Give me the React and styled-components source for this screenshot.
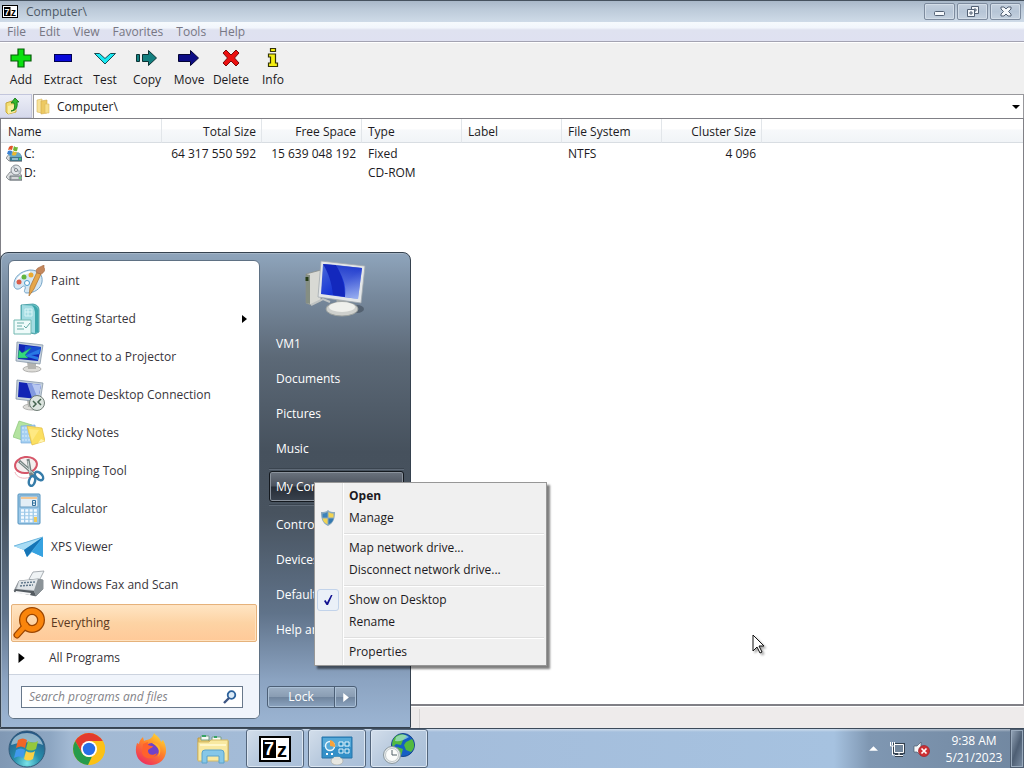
import styled, { createGlobalStyle, css } from "styled-components";

const GlobalStyle = createGlobalStyle`
    *, *::before, *::after {
        box-sizing: border-box;
    }

    body {
        margin: 0;
        font-family: "Open Sans", "Noto Sans", sans-serif;
        font-size: 12px;
        line-height: 16px;
        color: #1c1a22;
        background: #fff;
    }

    button, input {
        font: inherit;
        color: inherit;
    }

    button {
        padding: 0;
        border: 0;
        background: none;
    }

    ul {
        list-style: none;
        margin: 0;
        padding: 0;
    }

    svg {
        display: block;
        flex-shrink: 0;
    }
`;

const Desktop = styled.div`
    position: relative;
    display: flex;
    flex-direction: column;
    min-height: 100vh;
    overflow: hidden;
`;

/* ---------- file manager window ---------- */

const Window = styled.main`
    flex: 1;
    display: flex;
    flex-direction: column;
`;

const TitleBar = styled.header`
    display: flex;
    align-items: center;
    gap: 8px;
    height: 22px;
    padding: 0 3px 0 2px;
    border-top: 1px solid #46525f;
    background: linear-gradient(#a9b8c9, #bccad9 40%, #cfdbe8);
    color: #4d5865;

    h1 {
        flex: 1;
        margin: 0;
        font-size: 12px;
        font-weight: 400;
    }
`;

const WindowButtons = styled.div`
    display: flex;
    gap: 2px;
`;

const WindowButton = styled.button`
    display: flex;
    align-items: center;
    justify-content: center;
    width: 31px;
    height: 17px;
    border: 1px solid #7d8b9e;
    border-radius: 2px;
    background: linear-gradient(#c3cfdd, #b6c5d6 50%, #c4d1df);
    box-shadow: inset 0 0 0 1px #d3dde8;
`;

const MenuBar = styled.nav`
    display: flex;
    gap: 13px;
    height: 20px;
    padding: 1px 7px 0;
    border-bottom: 1px solid #a3a3b2;
    background: linear-gradient(#f6fafd, #f2f6fc 30%, #dfe2f0 42%, #dfe1f1);

    button {
        color: #777784;
    }
`;

const Toolbar = styled.div`
    display: flex;
    height: 52px;
    border-top: 1px solid #fff;
    background: #f0f0f0;
`;

const ToolButton = styled.button`
    display: flex;
    flex-direction: column;
    align-items: center;
    gap: 4px;
    width: 42px;
    padding-top: 5px;
`;

const AddressBar = styled.div`
    display: flex;
    height: 24px;
    background: #f0f0f0;
`;

const UpButton = styled.button`
    display: flex;
    align-items: center;
    width: 32px;
    padding-left: 5px;
    border: 1px solid #c3c6dc;
    border-left: 0;
    background: linear-gradient(#eceef7, #d6d9eb);
`;

const AddressField = styled.label`
    flex: 1;
    display: flex;
    align-items: center;
    gap: 6px;
    margin-left: 1px;
    padding: 0 3px 0 1px;
    border: 1px solid #98989c;
    border-bottom: 0;
    background: #fff;

    input {
        flex: 1;
        min-width: 0;
        padding: 0;
        border: 0;
        outline: 0;
        background: none;
    }
`;

const ListPane = styled.section`
    flex: 1;
    border: 1px solid #808086;
    border-bottom-width: 2px;
    background: #fff;
`;

const DriveTable = styled.table`
    width: 100%;
    table-layout: fixed;
    border-collapse: separate;
    border-spacing: 0;

    th, td {
        padding: 2px 6px 0;
        text-align: left;
        font-weight: 400;
        white-space: nowrap;
    }

    th {
        height: 24px;
        border-right: 1px solid #e2e6ea;
        border-bottom: 1px solid #d8dde2;
        background: linear-gradient(#fff 45%, #f7f9fb 46%, #f1f4f7);
    }

    th:first-child {
        padding-left: 7px;
    }

    th:last-child {
        border-right: 0;
    }

    th.number {
        padding-right: 5px;
    }

    td {
        height: 19px;
    }

    td:first-child {
        padding-left: 5px;
    }

    .number {
        text-align: right;
    }
`;

const NameCell = styled.div`
    display: flex;
    align-items: center;
    gap: 2px;
    height: 17px;
`;

const StatusBar = styled.footer`
    display: flex;
    height: 22px;
    padding: 2px 0 0 419px;
    border-top: 1px solid #fff;
    background: #eeebeb;

    span {
        border-left: 1px solid #d5d2d2;
    }
`;

/* ---------- start menu ---------- */

const StartMenu = styled.aside`
    position: absolute;
    left: 0;
    bottom: 40px;
    display: flex;
    width: 411px;
    padding: 7px 6px 8px 7px;
    border: 1px solid #36424f;
    border-radius: 8px 8px 0 0;
    background: linear-gradient(#8fa5bc 0, #77899d 9%, #5c6977 22%, #46515d 42%, #48535f 55%, #60738a 76%, #8ba3c1 90%, #9cb5d3);
    box-shadow: inset 1px 1px 0 #a3b4c5;
`;

const ProgramsPane = styled.div`
    display: flex;
    flex-direction: column;
    width: 252px;
    border: 1px solid #5f7184;
    border-radius: 6px;
    background: #fff;
    overflow: hidden;
`;

const ProgramList = styled.ul`
    padding: 1px 2px 0;
`;

const ProgramButton = styled.button`
    display: flex;
    align-items: center;
    gap: 6px;
    width: 100%;
    height: ${props => props.$short ? "32px" : "38px"};
    padding: 0 9px 0 2px;
    text-align: left;
    color: #38353b;

    span {
        flex: 1;
    }

    ${props => props.$active && css`
        border: 1px solid #e5b27b;
        border-radius: 2px;
        padding-left: 1px;
        background: linear-gradient(#ffe5c3, #fdd3a4 50%, #ffc998);
        box-shadow: inset 0 0 0 1px #ffe2c0;
        color: #5c3820;
    `}

    ${props => props.$short && css`
        gap: 23px;
        padding-left: 5px;
    `}
`;

const SearchArea = styled.div`
    flex: 1;
    padding: 11px 16px 10px 12px;
    border-top: 1px solid #ccd3df;
    background: #f0f4fb;
`;

const SearchField = styled.label`
    display: flex;
    align-items: center;
    height: 22px;
    padding: 0 5px 0 7px;
    border: 1px solid #68788b;
    background: #fff;

    input {
        flex: 1;
        min-width: 0;
        padding: 0;
        border: 0;
        outline: 0;
        background: none;
    }

    input::placeholder {
        color: #848489;
        font-style: italic;
        opacity: 1;
    }
`;

const PlacesPane = styled.div`
    flex: 1;
    display: flex;
    flex-direction: column;
    padding-left: 7px;
`;

const UserPicture = styled.div`
    display: flex;
    justify-content: center;
    height: 66px;
    padding-right: 2px;
`;

const PlaceButton = styled.button`
    display: block;
    width: 100%;
    height: 35px;
    padding-left: 7px;
    text-align: left;
    color: #fff;
    white-space: nowrap;

    ${props => props.$active && css`
        height: 31px;
        padding-left: 6px;
        border: 1px solid #14191f;
        border-radius: 3px;
        background: linear-gradient(#6b737e, #4b525d 48%, #272d36 52%, #3a424e);
        box-shadow: inset 0 0 0 1px #8a929c;
    `}
`;

const PlaceGroup = styled.ul`
    margin-left: 2px;

    & + & {
        margin-top: 2px;
        padding-top: 2px;
        border-top: 1px solid #3a444f;
        box-shadow: inset 0 1px 0 #5f6a77;
    }
`;

const LockGroup = styled.div`
    display: flex;
    width: 90px;
    height: 22px;
    margin-top: auto;
    margin-bottom: 11px;
    border: 1px solid #4c5f76;
    border-radius: 3px;
    background: linear-gradient(#9db0c5, #8a9db3 48%, #70859e 52%, #8ca4c0);
    box-shadow: inset 0 0 0 1px #abc0d6;
    color: #fff;
`;

const LockButton = styled.button`
    flex: 1;
`;

const LockArrow = styled.button`
    display: flex;
    align-items: center;
    justify-content: center;
    width: 22px;
    border-left: 1px solid #4c5f76;
    box-shadow: inset 1px 0 0 #abc0d6;
`;

/* ---------- context menu ---------- */

const ContextMenu = styled.ul`
    position: absolute;
    left: 314px;
    bottom: 102px;
    width: 233px;
    padding: 2px;
    border: 1px solid #979797;
    background: linear-gradient(90deg, #f1f1f1 27px, #e2e3e3 27px, #e2e3e3 28px, #fff 28px, #fff 29px, #f0f0f0 29px);
    box-shadow: 3px 3px 2px rgba(0, 0, 0, 0.5);
`;

const ContextItem = styled.button`
    display: flex;
    align-items: center;
    width: 100%;
    height: 22px;
    font-weight: ${props => props.$bold ? 700 : 400};
    text-align: left;
`;

const IconSlot = styled.span`
    display: flex;
    align-items: center;
    justify-content: center;
    width: 22px;
    height: 22px;
    margin-right: 10px;

    ${props => props.$checked && css`
        border: 1px solid #c2d3ea;
        border-radius: 3px;
        background: #eaf0f8;
    `}
`;

const ContextDivider = styled.li`
    height: 8px;
    margin-left: 27px;
    padding-top: 4px;

    &::before {
        content: "";
        display: block;
        height: 2px;
        border-top: 1px solid #dfdfdf;
        background: #fff;
    }
`;

/* ---------- taskbar ---------- */

const Taskbar = styled.nav`
    display: flex;
    align-items: stretch;
    height: 40px;
    border-top: 1px solid #3c4a5a;
    background:
        linear-gradient(rgba(255, 255, 255, 0.45) 0, rgba(255, 255, 255, 0) 3px),
        linear-gradient(90deg, #8098b4 0, #8da6c2 50px, #a2b9d3 70px, #a4bddb 430px, #a6c2e0 calc(100% - 190px), #7f97b2 calc(100% - 155px), #7187a0);
`;

const StartButton = styled.button`
    width: 60px;
    padding-left: 8px;
`;

const TaskList = styled.div`
    flex: 1;
    display: flex;
    gap: 4px;
`;

const TaskButton = styled.button`
    display: flex;
    align-items: center;
    justify-content: center;
    width: 58px;

    ${props => props.$open && css`
        border: 1px solid #53657b;
        border-radius: 3px;
        background: linear-gradient(135deg, #d3deeb, #b5c7dc 50%, #a9bfd9);
        box-shadow: inset 0 0 0 1px #dbe6f2;
    `}
`;

const Tray = styled.div`
    display: flex;
    align-items: center;
    gap: 8px;

    button:first-child {
        padding-right: 3px;
    }
`;

const Clock = styled.time`
    width: 72px;
    color: #fff;
    text-align: center;
    line-height: 17px;
`;

const ShowDesktop = styled.button`
    align-self: stretch;
    width: 14px;
    margin-left: -8px;
    border: 1px solid #4e5d70;
    background: linear-gradient(110deg, #97a8bb, #4e5f74 50%, #7c8ea4);
    box-shadow: inset 0 0 0 1px #9aabbd;
`;

const Pointer = styled.svg`
    position: absolute;
    left: 752px;
    bottom: 113px;
    filter: drop-shadow(2px 2px 1px rgba(0, 0, 0, 0.35));
`;

/* ---------- icons ---------- */

const SevenZip = ({ size = 16 }) => (
    <svg width={size} height={size === 16 ? 13 : 26} viewBox="0 0 32 26">
        <rect width="32" height="26" fill="#000" />
        <rect x="2" y="2" width="28" height="22" fill="#fff" />
        <rect x="4" y="4" width="13" height="18" fill="#000" />
        <text x="5" y="19" fill="#fff" fontFamily="Liberation Sans, sans-serif" fontWeight="700" fontSize="18">7</text>
        <text x="18" y="21" fill="#000" fontFamily="Liberation Sans, sans-serif" fontWeight="700" fontSize="20">z</text>
    </svg>
);

const toolShapes = {
    Add: <path d="M9 1h6v6h7v6h-7v6H9v-6H2V7h7z" fill="#0be010" stroke="#045c08" strokeWidth="1.2" />,
    Extract: <rect x="3.500" y="6.500" width="17" height="7" fill="#0909d9" stroke="#000052" />,
    Test: <path d="M1.500 5.500h5l5.500 5 5.500-5h5L12 16z" fill="#19e9f2" stroke="#154b52" />,
    Copy: (
        <g fill="#138080" stroke="#0a3334">
            <path d="M1.500 6.500h3v7h-3zM7.500 6.500h6v-4l8 7.500-8 7.500v-4h-6z" />
        </g>
    ),
    Move: <path d="M1.500 6.500h12v-4l8 7.500-8 7.500v-4h-12z" fill="#0c0c85" stroke="#030334" />,
    Delete: <path d="M7 2l5 5 5-5 3 3-4.500 5 4.500 5-3 3-5-5-5 5-3-3 4.500-5L4 5z" fill="#ec1010" stroke="#780b0b" />,
    Info: (
        <g fill="#f4ee12" stroke="#343305" strokeWidth="1.200">
            <path d="M9.500.500h5v3h-5z" />
            <path d="M7.500 6h7v9h2v3.500h-9V15h2V9h-2z" />
        </g>
    ),
};

const UpFolder = () => (
    <svg width="16" height="18" viewBox="0 0 16 18">
        <path d="M1 6l6-2 4 2v9l-8 2-2-2z" fill="#f2dc70" stroke="#c9a93b" />
        <path d="M3 9l9-2-2 8-7 2z" fill="#faeea0" />
        <path d="M6 14c4-1 4-4 3-8H6l4-5 4 4h-2c1 5-1 9-6 9z" fill="#33b82c" stroke="#127012" strokeWidth=".8" />
    </svg>
);

const Folder = () => (
    <svg width="16" height="17" viewBox="0 0 16 17">
        <path d="M2 2l5-1v14l-5-1z" fill="#f8e39a" stroke="#d8b75d" strokeWidth=".6" />
        <path d="M6 3l6-1v13l-6 1z" fill="#edc962" stroke="#d2aa49" strokeWidth=".6" />
        <path d="M10 6h4v9h-4z" fill="#f7df8b" stroke="#dcba61" strokeWidth=".6" />
    </svg>
);

const Drive = ({ system }) => (
    <svg width="16" height="17" viewBox="0 0 16 17">
        <path d="M4 8h9l3 4v4H3l-3-3z" fill="#d9dcde" stroke="#777c80" strokeWidth=".8" />
        <path d="M4 12h12v4H4z" fill={system ? "#2f7f9d" : "#b3b7ba"} stroke="#5d676e" strokeWidth=".8" />
        {system ? (
            <g>
                <path d="M2 9l2-3 10 2 2 4H4z" fill="#6aaac6" />
                <path d="M3 2q2-2 4-1L6 5Q4 4 2 5z" fill="#e2562a" />
                <path d="M8 1q2 2 4 1l-1 4q-2 1-4-1z" fill="#6fb536" />
                <path d="M2 6q2-1 4 0l-1 4Q3 9 1 9z" fill="#3a80d3" />
                <path d="M7 6q2 2 4 1l-1 3q-2 1-4 0z" fill="#efb92c" />
            </g>
        ) : (
            <g>
                <circle cx="10" cy="6" r="5" fill="#e4e8eb" stroke="#868d93" />
                <path d="M10 6L7 2M10 6l4 2" stroke="#b5bdc3" strokeWidth="2" />
                <circle cx="10" cy="6" r="1.500" fill="#fff" stroke="#767d84" />
            </g>
        )}
        <path d="M6 14h6" stroke="#f6f6f6" />
        <circle cx="14" cy="14" r="1" fill="#50de5a" />
    </svg>
);

const Triangle = ({ dir = "right", color = "#000", size = 8 }) => (
    <svg width={size} height={size} viewBox="0 0 8 8">
        <path d={dir === "right" ? "M2 0l5 4-5 4z" : dir === "down" ? "M0 2h8L4 6z" : "M0 6h8L4 2z"} fill={color} />
    </svg>
);

const PaintIcon = () => (
    <svg width="32" height="32" viewBox="0 0 32 32">
        <path d="M1 21C0 12 8 6 17 5c9 0 13 5 12 12-1 7-8 11-15 11-3 0-3-2-2-4 1-3-1-4-3-2-3 3-7 3-8-1z" fill="#d4e7f4" stroke="#75a4c6" />
        <path d="M4 16c2-5 7-8 13-9" fill="none" stroke="#fff" strokeWidth="2" />
        <circle cx="6" cy="17" r="2.500" fill="#d95c47" />
        <circle cx="11" cy="12" r="2.500" fill="#62b53e" />
        <circle cx="18" cy="10" r="2.500" fill="#ecaa31" />
        <circle cx="14" cy="18" r="2.500" fill="#fff" stroke="#4b9dcc" />
        <path d="M16 31l1-9 7-15 4 2-7 15z" fill="#e6a74b" stroke="#a97032" strokeWidth=".7" />
        <path d="M24 8c-2-3 0-5 3-6l4-2v3c2 1 0 5-3 6z" fill="#c5875c" stroke="#a2683f" strokeWidth=".6" />
    </svg>
);

const GettingStartedIcon = () => (
    <svg width="32" height="32" viewBox="0 0 32 32">
        <path d="M8 2l12-1q6 1 6 6v22l-4 2-14-3z" fill="#6ec1c6" stroke="#37949c" strokeWidth=".8" />
        <path d="M9 2l10 1q3 2 3 6v21l-13-3z" fill="#a2dce2" />
        <path d="M19 2q5 1 6 5v22l-3 1V9q0-4-3-7z" fill="#3aa5aa" />
        <path d="M12 6h7v7h-7zM15 6v7M12 9h7" fill="none" stroke="#d8f4f6" />
        <path d="M1 17h17v14H1z" fill="#effbfa" stroke="#73b8b1" />
        <path d="M4 20h7M4 23h5M4 26h7M11 23l2 2 4-5" fill="none" stroke="#68aba6" />
    </svg>
);

const Monitor = ({ children }) => (
    <svg width="32" height="32" viewBox="0 0 32 32">
        <ellipse cx="19" cy="28" rx="9" ry="3" fill="#dddcd8" stroke="#a2a29f" strokeWidth=".8" />
        <path d="M14 21l9 1v6h-8z" fill="#b4b4b0" />
        <path d="M4 1l26 3-3 19-24-3z" fill="#c6d2dd" stroke="#8697a7" strokeWidth=".8" />
        <path d="M6 3l22 3-3 14-20-2z" fill="#1224b4" />
        {children}
    </svg>
);

const ProjectorIcon = () => (
    <Monitor>
        <path d="M12 5l16 1-1 7-16 3z" fill="#194dce" />
        <path d="M11 15l16-7-1 5-8 1 7 2v3z" fill="#2878e4" />
        <path d="M5 17l1-8 3 3 9-5-6 7 3 3z" fill="#35d97b" stroke="#199a66" strokeWidth=".5" />
    </Monitor>
);

const RemoteIcon = () => (
    <Monitor>
        <path d="M14 4l14 2-3 14-6-1z" fill="#8299e0" />
        <path d="M19 5l9 1-3 14z" fill="#b8c8f0" />
        <circle cx="24" cy="24" r="7.500" fill="#dce4df" stroke="#6e7c75" />
        <path d="M20 22l3 3-3 3M28 20l-3 3 3 3" fill="none" stroke="#44624e" strokeWidth="1.500" />
    </Monitor>
);

const StickyIcon = () => (
    <svg width="32" height="32" viewBox="0 0 32 32">
        <path d="M6 4l13 4-4 17-15-5z" fill="#b4e3a0" stroke="#89c679" strokeWidth=".7" />
        <path d="M8 9l14-1 1 18H8z" fill="#a5d0f2" stroke="#78acdc" strokeWidth=".7" />
        <path d="M9 11h10M9 15h10M9 19h10M9 23h10" stroke="#dceefa" strokeDasharray="2 1" />
        <path d="M14 9l15 2 3 13-13 4z" fill="#fbdf61" stroke="#e2bd43" strokeWidth=".7" />
        <path d="M16 12l10 1-7 11z" fill="#ffed92" opacity=".7" />
        <path d="M25 26l7-2-4-2z" fill="#fff3af" />
    </svg>
);

const SnippingIcon = () => (
    <svg width="32" height="32" viewBox="0 0 32 32">
        <ellipse cx="13" cy="10" rx="11" ry="8" transform="rotate(-8 13 10)" fill="#f3eeee" stroke="#d65669" strokeWidth="2" />
        <path d="M2 17c1 5 8 8 15 5" fill="none" stroke="#f0b6be" />
        <path d="M6 6l16 14M15 4l3 17" stroke="#788483" strokeWidth="3" />
        <path d="M7 7l14 12M15 6l2 12" stroke="#d4dedc" />
        <ellipse cx="19" cy="26" rx="3" ry="5" transform="rotate(15 19 26)" fill="none" stroke="#367ca9" strokeWidth="2.500" />
        <ellipse cx="26" cy="21" rx="3" ry="5" transform="rotate(-45 26 21)" fill="none" stroke="#367ca9" strokeWidth="2.500" />
    </svg>
);

const CalculatorIcon = () => (
    <svg width="32" height="32" viewBox="0 0 32 32">
        <rect x="5" y="1" width="22" height="30" rx="1" fill="#9dc9e9" stroke="#5191bd" />
        <rect x="7" y="3" width="18" height="11" fill="#e3eef6" stroke="#699dc2" />
        <path d="M8 4h16v2H8z" fill="#f3c794" />
        <path d="M19.500 7.500h3v5h-3zM19 10h3" fill="none" stroke="#33719d" />
        <path d="M8 17.500h16M8 21h16M8 24.500h16M8 28h16" stroke="#f4faff" strokeWidth="2.500" strokeDasharray="3 1.300" />
        <path d="M21 24h3v5h-3z" fill="#efca5b" />
    </svg>
);

const XpsIcon = () => (
    <svg width="32" height="32" viewBox="0 0 32 32">
        <path d="M1 15l29-9v20l-11-5-5 5-3-7z" fill="#4eaee2" />
        <path d="M1 15l29-9-19 13z" fill="#a8dcf5" />
        <path d="M30 6L14 26l-3-7z" fill="#1675b6" />
        <path d="M30 6v20l-11-5z" fill="#36a2e0" />
        <path d="M1 15l29-9" stroke="#73b9df" />
    </svg>
);

const FaxIcon = () => (
    <svg width="32" height="32" viewBox="0 0 32 32">
        <path d="M16 10l4-7 11-1-6 12z" fill="#eff3f5" stroke="#949ba1" strokeWidth=".8" />
        <path d="M6 12l19-2 5 1v9l-7 7-22-5z" fill="#b6bcc1" stroke="#757c83" strokeWidth=".8" />
        <path d="M6 12l19-2-4 11-17-1z" fill="#dfe4e7" />
        <path d="M8 14l5-.500M14 13.500l8-.500M7 17l5-.500M13 16.500l7-.500" stroke="#62798c" strokeWidth="1.500" strokeDasharray="2 1" />
        <path d="M2 20l19 2 2 5-22-4z" fill="#545b61" />
        <path d="M3 22l15 2-1 2-15-2z" fill="#f5f6f7" />
        <path d="M25 10l5 1v9l-7 7-2-5z" fill="#8b9398" />
    </svg>
);

const EverythingIcon = () => (
    <svg width="32" height="32" viewBox="0 0 32 32">
        <path d="M13 18L4 28" stroke="#9b4500" strokeWidth="7" strokeLinecap="round" />
        <circle cx="19" cy="13" r="9" fill="none" stroke="#9b4500" strokeWidth="8" />
        <path d="M13 18L4 28" stroke="#fa850c" strokeWidth="4.500" strokeLinecap="round" />
        <circle cx="19" cy="13" r="9" fill="none" stroke="#fa850c" strokeWidth="5.500" />
    </svg>
);

const SearchIcon = () => (
    <svg width="14" height="14" viewBox="0 0 14 14">
        <circle cx="8.500" cy="5" r="3.800" fill="#dcebf7" stroke="#2b619b" strokeWidth="1.800" />
        <path d="M6 8l-5 5" stroke="#3d5583" strokeWidth="2.400" />
    </svg>
);

const ComputerIcon = () => (
    <svg width="64" height="64" viewBox="0 0 64 64">
        <defs>
            <linearGradient id="screen" x1="0" x2="1" y2="1">
                <stop offset="0" stopColor="#4a6ad8" />
                <stop offset=".55" stopColor="#1735d5" />
                <stop offset="1" stopColor="#85a1ee" />
            </linearGradient>
            <linearGradient id="shine" x2="0" y2="1">
                <stop offset="0" stopColor="#1e38c8" />
                <stop offset="1" stopColor="#a9bdf3" />
            </linearGradient>
        </defs>
        <path d="M3 14l15-4v31L8 45l-5-2z" fill="#d8d9d4" stroke="#898e8a" strokeWidth=".8" />
        <path d="M3 14l4 1v29l-4-1z" fill="#858e83" />
        <path d="M4 17v4" stroke="#263c18" strokeWidth="3" />
        <path d="M8 45l12-6 7 3" fill="none" stroke="#bfc3c3" strokeWidth="2" />
        <ellipse cx="54" cy="49" rx="7" ry="4" fill="#35404b" opacity=".5" />
        <ellipse cx="39" cy="49" rx="16" ry="7" fill="#ced0cd" stroke="#9ca19f" />
        <path d="M33 37h12l-1 9-10-1z" fill="#a5aaa9" />
        <ellipse cx="39" cy="47" rx="13" ry="5" fill="#eff0ec" />
        <path d="M18 1l44 5-4 37-43-6z" fill="#e3e6e8" stroke="#a2a9ae" strokeWidth=".8" />
        <path d="M20 4l39 4-4 31-37-5z" fill="url(#screen)" />
        <path d="M33 5l26 3-4 31-13-2c2-11-3-22-9-32z" fill="url(#shine)" opacity=".7" />
        <path d="M20 4l13 1c6 10 9 21 9 32l-12-2c-1-11-4-21-10-31z" fill="#1328bd" />
    </svg>
);

const ShieldIcon = () => (
    <svg width="16" height="16" viewBox="0 0 16 16">
        <path d="M8 0c2 2 4 2 7 2 0 6-1 11-7 14C2 13 1 8 1 2c3 0 5 0 7-2z" fill="#8ba9be" />
        <path d="M7.500 2v5.500H2.500V3.500c2 0 3.500-.500 5-1.500z" fill="#3c83ba" />
        <path d="M8.500 2c1.500 1 3 1.500 5 1.500v4h-5z" fill="#f2d451" />
        <path d="M2.500 8.500h5v5.800c-3-1.500-4.500-3-5-5.800z" fill="#f2d451" />
        <path d="M8.500 8.500h5c-.500 2.800-2 4.300-5 5.800z" fill="#347ab1" />
    </svg>
);

const CheckIcon = () => (
    <svg width="12" height="14" viewBox="0 0 12 14">
        <path d="M2 8l1.500-1L5 9.500 9 2h1.500L6 12H4.500z" fill="#101090" />
    </svg>
);

const StartOrb = () => (
    <svg width="38" height="38" viewBox="0 0 38 38">
        <defs>
            <radialGradient id="orb" cx=".5" cy=".9" r=".9">
                <stop offset="0" stopColor="#79e3e8" />
                <stop offset=".4" stopColor="#278fab" />
                <stop offset="1" stopColor="#245283" />
            </radialGradient>
        </defs>
        <circle cx="19" cy="19" r="18" fill="url(#orb)" stroke="#345c7b" />
        <path d="M3 15C5 6 12 3 19 3s14 4 16 12c-9-3-19-4-32 0z" fill="#d6e8ee" opacity=".6" />
        <path d="M10 10q5-3 9 0l-2 8q-4-3-9 0z" fill="#f16527" />
        <path d="M20 11q5 3 10 0l-2 8q-5 3-10 0z" fill="#95c83c" />
        <path d="M8 20q5-3 9 0l-2 8q-4-3-9 0z" fill="#4199ed" />
        <path d="M18 21q5 3 9 0l-2 8q-5 3-9 0z" fill="#fbd045" />
    </svg>
);

const ChromeIcon = () => (
    <svg width="32" height="32" viewBox="0 0 32 32">
        <circle cx="16" cy="16" r="16" fill="#fbc116" />
        <path d="M2.200 8A16 16 0 0 1 29.800 8H16l-7 12z" fill="#e33b2e" />
        <path d="M2.200 8l6.900 12A8 8 0 0 0 19 23.400L15 32A16 16 0 0 1 2.200 8z" fill="#269b4b" />
        <path d="M22.900 20L16 32a16 16 0 0 0 13.800-24H16z" fill="#fbc116" />
        <circle cx="16" cy="16" r="8" fill="#fff" />
        <circle cx="16" cy="16" r="6.200" fill="#286ee6" />
    </svg>
);

const FirefoxIcon = () => (
    <svg width="32" height="32" viewBox="0 0 32 32">
        <defs>
            <linearGradient id="fox" x1=".8" x2=".2" y1="0" y2="1">
                <stop offset="0" stopColor="#ffe033" />
                <stop offset=".45" stopColor="#ff812b" />
                <stop offset="1" stopColor="#ed2763" />
            </linearGradient>
        </defs>
        <path d="M19 0c2 3 6 4 7 9l2-2c8 14-1 25-12 25C5 32-2 22 2 10l2 1c0-3 2-5 4-7l1 4c4-2 8-1 10-8z" fill="url(#fox)" />
        <circle cx="17" cy="17" r="7" fill="#7142c9" />
        <path d="M8 11l5-2c-1 3 1 4 5 4-1 3-5 2-5 5 0 4 5 5 9 2-2 7-13 7-15 0z" fill="#ff622c" />
        <path d="M17 10c8-1 11 8 6 14 3-7-1-11-6-14z" fill="#ffb52b" />
    </svg>
);

const ExplorerIcon = () => (
    <svg width="32" height="32" viewBox="0 0 32 32">
        <path d="M1 5h9l2 3h19v19H1z" fill="#e6c869" stroke="#bc9844" />
        <path d="M4 3h8v4H4zM15 4h9v5h-9z" fill="#f7fbf6" stroke="#79a18a" />
        <path d="M5 3h4M17 4h3" stroke="#36a366" strokeWidth="2" />
        <path d="M1 9h11l2-2h17v21H1z" fill="#f9e9a1" stroke="#d3b965" />
        <path d="M3 12h26" stroke="#fff7ca" strokeWidth="2" />
        <path d="M5 30V20q0-3 3-3h16q3 0 3 3v10h-5v-7H10v7z" fill="#85c7e8" stroke="#5ba2ca" />
    </svg>
);

const PanelIcon = () => (
    <svg width="34" height="32" viewBox="0 0 34 32">
        <path d="M2 4h30v21H2z" fill="#3490c8" stroke="#2775aa" />
        <path d="M3 5h28v9H3z" fill="#56a9d8" />
        <circle cx="10" cy="13" r="4.500" fill="#56a9d8" stroke="#e9f6fc" strokeWidth="1.500" />
        <path d="M10 13V7a6 6 0 0 1 5 7z" fill="#f7a33c" />
        <path d="M19 9h4v4h-4zM25 9h4v4h-4zM19 16h4v4h-4zM25 16h4v4h-4z" fill="#2289c1" stroke="#e5f4fc" />
        <path d="M6 21h2M11 21h2" stroke="#fff" strokeWidth="2" />
        <ellipse cx="17" cy="28" rx="6" ry="4" fill="#e7e7e1" stroke="#a9aba5" strokeWidth=".7" />
        <path d="M14 24h6v3h-6z" fill="#e1e1dc" />
    </svg>
);

const GlobeClockIcon = () => (
    <svg width="32" height="32" viewBox="0 0 32 32">
        <circle cx="20" cy="12" r="11.500" fill="#165ec5" stroke="#17448b" />
        <path d="M12 4c4-4 9-3 12-1l-4 4-2 5-5-1-3 3c-2-3 0-8 2-10zM23 9l6-3c3 5 3 9-1 13l-5-2-2-5zM14 14l6 2-2 7-4-2z" fill="#53ba3f" />
        <path d="M13 4q7-5 13 0-7 5-14 4z" fill="#b9ebf4" opacity=".6" />
        <circle cx="9" cy="22" r="8.500" fill="#e7ebec" stroke="#8b989e" />
        <circle cx="9" cy="22" r="6.500" fill="#fbfcfb" stroke="#c1c8ca" />
        <path d="M9 17v5h5" fill="none" stroke="#536069" />
    </svg>
);

const NetworkIcon = () => (
    <svg width="16" height="16" viewBox="0 0 16 16">
        <path d="M5.500 3.500h9v8h-9zM10 12v2M6 14.500h8" fill="#64788e" stroke="#33404e" strokeWidth="3" />
        <path d="M5.500 3.500h9v8h-9zM10 12v2M6 14.500h8" fill="#72869b" stroke="#fff" />
        <path d="M1.500 1v4h4V1M3.500 1v3M3.500 5v9h2" fill="none" stroke="#fff" />
    </svg>
);

const MutedIcon = () => (
    <svg width="17" height="16" viewBox="0 0 17 16">
        <path d="M1 5h3l4-4v14l-4-4H1z" fill="#f4f6f8" stroke="#4c5c6e" strokeWidth=".7" />
        <circle cx="11" cy="10" r="5.500" fill="#ce3034" stroke="#a12026" strokeWidth=".7" />
        <path d="M8.500 7.500l5 5M13.500 7.500l-5 5" stroke="#fff" strokeWidth="1.700" />
    </svg>
);

const windowGlyphs = {
    Minimize: <rect x="2.500" y="6.500" width="10" height="4" rx="1" />,
    Restore: (
        <g>
            <path d="M6.500 1.500h7v7h-7z" />
            <path d="M9 4h2v2H9z" />
            <path d="M2.500 4.500h7v7h-7z" />
            <path d="M5 7h2v2H5z" />
        </g>
    ),
    Close: <path d="M3 2h3l2 2 2-2h3v2l-2.500 2.500L13 9v2h-3L8 9l-2 2H3V9l2.500-2.500L3 4z" />,
};

/* ---------- data ---------- */

const menus = ["File", "Edit", "View", "Favorites", "Tools", "Help"];

const columns = [
    { name: "Name", width: 161 },
    { name: "Total Size", width: 100, number: true },
    { name: "Free Space", width: 100, number: true },
    { name: "Type", width: 100 },
    { name: "Label", width: 100 },
    { name: "File System", width: 100 },
    { name: "Cluster Size", width: 100, number: true },
];

const drives = [
    ["C:", "64 317 550 592", "15 639 048 192", "Fixed", "", "NTFS", "4 096"],
    ["D:", "", "", "CD-ROM", "", "", ""],
];

const programs = [
    { name: "Paint", Icon: PaintIcon },
    { name: "Getting Started", Icon: GettingStartedIcon, more: true },
    { name: "Connect to a Projector", Icon: ProjectorIcon },
    { name: "Remote Desktop Connection", Icon: RemoteIcon },
    { name: "Sticky Notes", Icon: StickyIcon },
    { name: "Snipping Tool", Icon: SnippingIcon },
    { name: "Calculator", Icon: CalculatorIcon },
    { name: "XPS Viewer", Icon: XpsIcon },
    { name: "Windows Fax and Scan", Icon: FaxIcon },
    { name: "Everything", Icon: EverythingIcon, active: true },
];

const places = [
    ["VM1", "Documents", "Pictures", "Music"],
    ["My Computer"],
    ["Control Panel", "Devices and Printers", "Default Programs", "Help and Support"],
];

const contextItems = [
    { name: "Open", bold: true },
    { name: "Manage", icon: <ShieldIcon /> },
    null,
    { name: "Map network drive..." },
    { name: "Disconnect network drive..." },
    null,
    { name: "Show on Desktop", icon: <CheckIcon />, checked: true },
    { name: "Rename" },
    null,
    { name: "Properties" },
];

const tasks = [
    { name: "Google Chrome", icon: <ChromeIcon /> },
    { name: "Firefox", icon: <FirefoxIcon /> },
    { name: "Windows Explorer", icon: <ExplorerIcon /> },
    { name: "7-Zip", icon: <SevenZip size={32} />, open: true },
    { name: "Control Panel", icon: <PanelIcon />, open: true },
    { name: "Date and Time", icon: <GlobeClockIcon />, open: true },
];

/* ---------- parts ---------- */

const FileManager = () => {
    return (
        <Window>
            <TitleBar>
                <SevenZip />
                <h1>Computer\</h1>
                <WindowButtons>
                    {Object.keys(windowGlyphs).map(name => (
                        <WindowButton key={name} aria-label={name}>
                            <svg width="16" height="13" viewBox="0 0 16 13" fill="#f5f8fb" stroke="#536174">
                                {windowGlyphs[name]}
                            </svg>
                        </WindowButton>
                    ))}
                </WindowButtons>
            </TitleBar>
            <MenuBar>
                {menus.map(name => <button key={name}>{name}</button>)}
            </MenuBar>
            <Toolbar>
                {Object.keys(toolShapes).map(name => (
                    <ToolButton key={name}>
                        <svg width="24" height="20" viewBox="0 0 24 20">{toolShapes[name]}</svg>
                        {name}
                    </ToolButton>
                ))}
            </Toolbar>
            <AddressBar>
                <UpButton aria-label="Up one level"><UpFolder /></UpButton>
                <AddressField>
                    <Folder />
                    <input aria-label="Address" defaultValue="Computer\" />
                    <button aria-label="Show addresses"><Triangle dir="down" /></button>
                </AddressField>
            </AddressBar>
            <ListPane>
                <DriveTable>
                    <colgroup>
                        {columns.map(col => <col key={col.name} width={col.width} />)}
                        <col />
                    </colgroup>
                    <thead>
                        <tr>
                            {columns.map(col => (
                                <th key={col.name} className={col.number ? "number" : ""}>{col.name}</th>
                            ))}
                            <th />
                        </tr>
                    </thead>
                    <tbody>
                        {drives.map((drive, row) => (
                            <tr key={drive[0]}>
                                {drive.map((value, i) => (
                                    <td key={columns[i].name} className={columns[i].number ? "number" : ""}>
                                        {i === 0 ? <NameCell><Drive system={row === 0} />{value}</NameCell> : value}
                                    </td>
                                ))}
                                <td />
                            </tr>
                        ))}
                    </tbody>
                </DriveTable>
            </ListPane>
            <StatusBar><span /></StatusBar>
        </Window>
    );
};

const Start = () => {
    return (
        <StartMenu>
            <ProgramsPane>
                <ProgramList>
                    {programs.map(({ name, Icon, more, active }) => (
                        <li key={name}>
                            <ProgramButton $active={active}>
                                <Icon />
                                <span>{name}</span>
                                {more && <Triangle />}
                            </ProgramButton>
                        </li>
                    ))}
                    <li>
                        <ProgramButton $short>
                            <Triangle size={10} />
                            <span>All Programs</span>
                        </ProgramButton>
                    </li>
                </ProgramList>
                <SearchArea>
                    <SearchField>
                        <input aria-label="Search" placeholder="Search programs and files" />
                        <SearchIcon />
                    </SearchField>
                </SearchArea>
            </ProgramsPane>
            <PlacesPane>
                <UserPicture><ComputerIcon /></UserPicture>
                {places.map(group => (
                    <PlaceGroup key={group[0]}>
                        {group.map(name => (
                            <li key={name}>
                                <PlaceButton $active={name === "My Computer"}>{name}</PlaceButton>
                            </li>
                        ))}
                    </PlaceGroup>
                ))}
                <LockGroup>
                    <LockButton>Lock</LockButton>
                    <LockArrow aria-label="More power options"><Triangle color="#fff" size={9} /></LockArrow>
                </LockGroup>
            </PlacesPane>
        </StartMenu>
    );
};

const App = () => {
    return (
        <Desktop>
            <GlobalStyle />
            <FileManager />
            <Taskbar>
                <StartButton aria-label="Start"><StartOrb /></StartButton>
                <TaskList>
                    {tasks.map(task => (
                        <TaskButton key={task.name} aria-label={task.name} $open={task.open}>{task.icon}</TaskButton>
                    ))}
                </TaskList>
                <Tray>
                    <button aria-label="Show hidden icons"><Triangle dir="up" color="#fff" size={9} /></button>
                    <NetworkIcon />
                    <MutedIcon />
                    <Clock>9:38 AM<br />5/21/2023</Clock>
                    <ShowDesktop aria-label="Show desktop" />
                </Tray>
            </Taskbar>
            <Start />
            <ContextMenu>
                {contextItems.map((item, i) => item ? (
                    <li key={item.name}>
                        <ContextItem $bold={item.bold}>
                            <IconSlot $checked={item.checked}>{item.icon}</IconSlot>
                            {item.name}
                        </ContextItem>
                    </li>
                ) : <ContextDivider key={i} />)}
            </ContextMenu>
            <Pointer width="13" height="21" viewBox="0 0 13 21">
                <path d="M1 1v16l4-4 3 6 2-1-3-6h5z" fill="#fff" stroke="#111" />
            </Pointer>
        </Desktop>
    );
};

export default App;
